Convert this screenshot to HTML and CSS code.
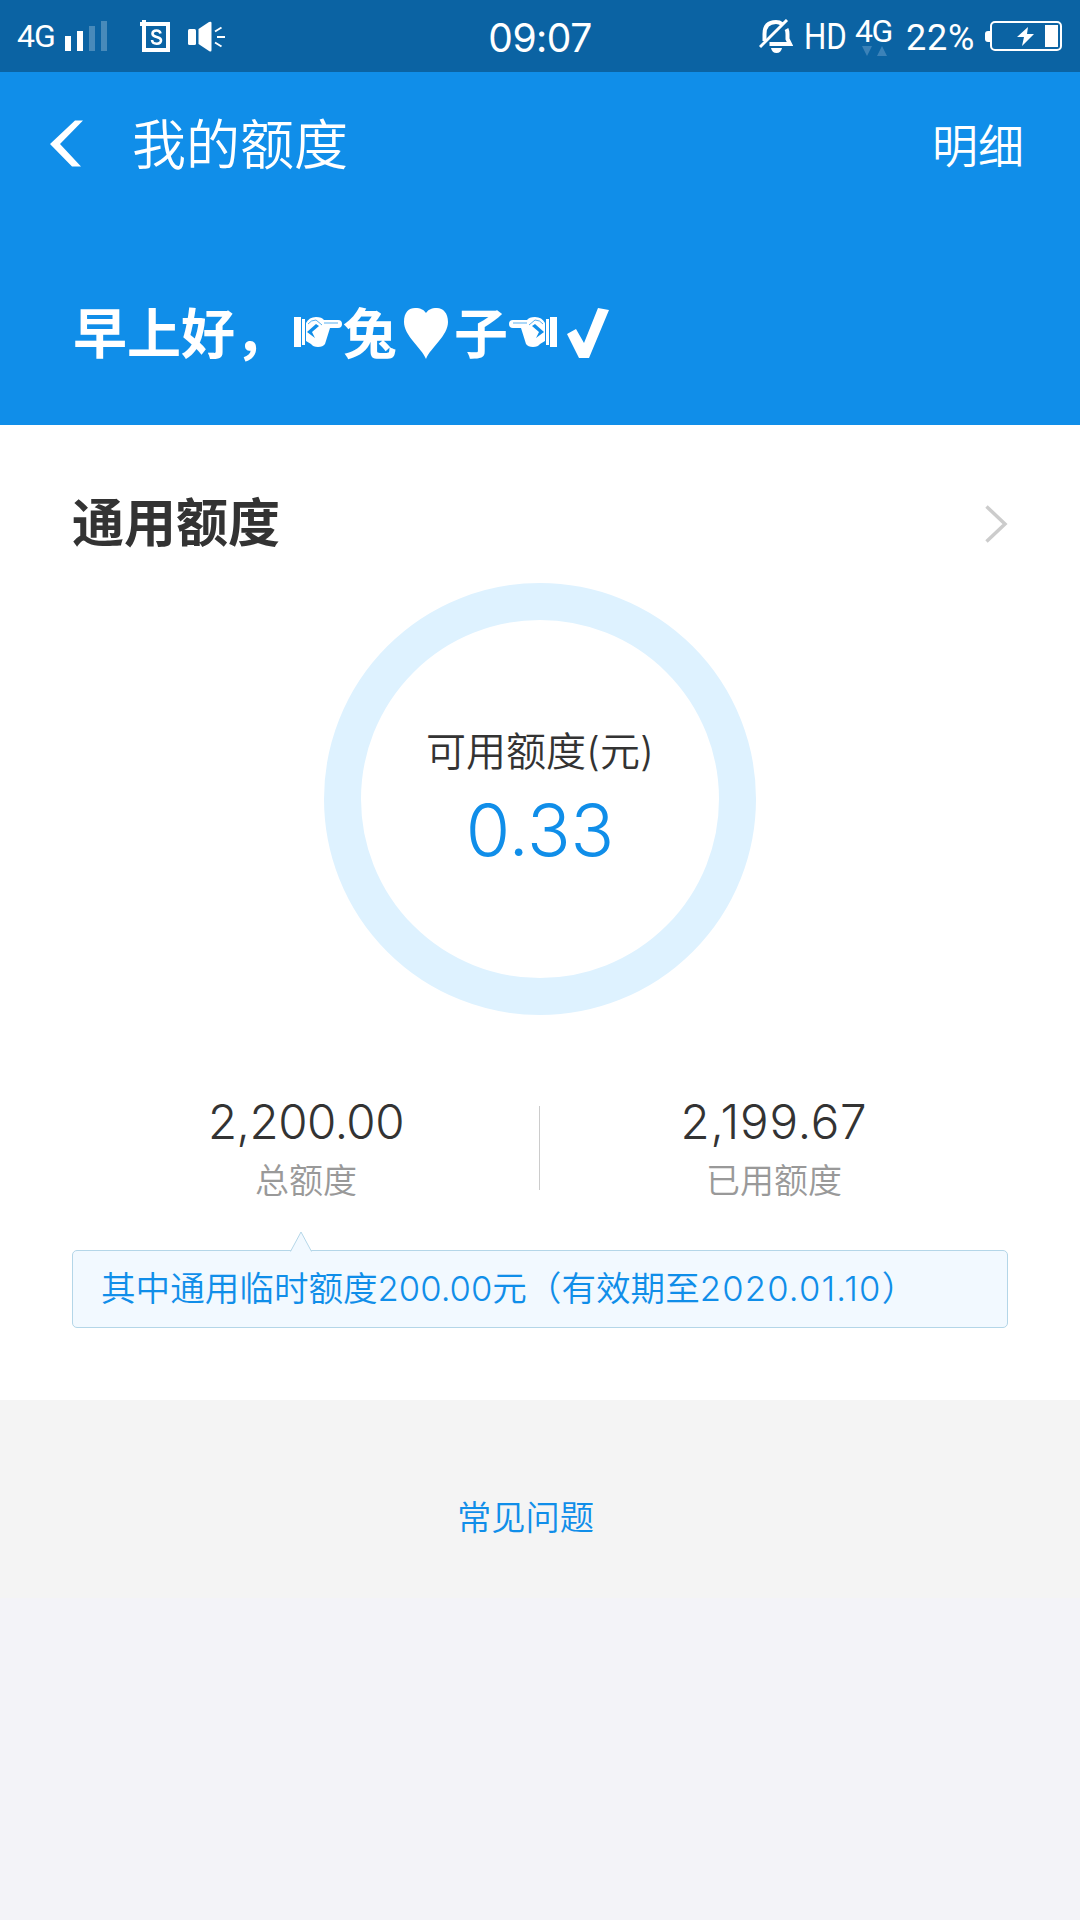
FILE: index.html
```html
<!DOCTYPE html>
<html lang="zh-CN">
<head>
  <meta charset="UTF-8" />
  <meta name="viewport" content="width=device-width, initial-scale=1.0" />
  <title>我的额度</title>
  <link rel="stylesheet" href="styles.css">
</head>
<body>
  <div class="status-bar">
    <div class="status-left">
      <span class="network">4G</span>
      <svg class="signal" width="42" height="30" viewBox="0 0 42 30" fill="#fff">
        <rect x="0" y="15" width="6" height="15" />
        <rect x="12" y="10" width="6" height="20" />
        <rect x="24" y="5" width="6" height="25" opacity="0.25" />
        <rect x="36" y="0" width="6" height="30" opacity="0.25" />
      </svg>
      <svg class="screenshot" width="30" height="32" viewBox="0 0 30 32" fill="none" stroke="#fff">
        <path d="M4 0v30H28V4H0" stroke-width="4" />
        <path d="M20.500 13.500C20 11 18.500 10.500 16.500 10.500C14 10.500 12.500 11.700 12.500 13.700C12.500 18.300 21 15.500 21 20.300C21 22.500 19 23.700 16.700 23.700C14 23.700 12.200 22.300 12 20" stroke-width="2.600" />
      </svg>
      <svg class="speaker" width="38" height="32" viewBox="0 0 38 32" fill="#fff">
        <rect x="0" y="8" width="8" height="16" rx="1.500" />
        <path d="M10.500 8L21 1Q23.500 0 23.500 2V29Q23.500 31.500 21 30L10.500 23Z" />
        <path d="M27 10.500L33.500 6.500M29 16H37M27 21.500L33.500 25.500" stroke="#fff" stroke-width="2" />
      </svg>
    </div>
    <div class="time">09:07</div>
    <div class="status-right">
      <svg class="bell" width="34" height="34" viewBox="0 0 34 34" fill="none" stroke="#fff">
        <path d="M5.500 22V15C5.500 7 9.500 3 17 3Q20.500 3 23 5M27.500 10Q28.500 12 28.500 15V20L31 25H10.500" stroke-width="4" />
        <path d="M1 28L28 1" stroke-width="3" />
        <path d="M12 29H23Q22 34 17.500 34Q13 34 12 29Z" fill="#fff" stroke="none" />
      </svg>
      <span class="hd">HD</span>
      <div class="data">
        <span>4G</span>
        <svg width="26" height="10" viewBox="0 0 26 10" fill="#3c82b8">
          <path d="M0 0H10L5 10ZM15 10H25L20 0Z" />
        </svg>
      </div>
      <span class="percent">22%</span>
      <svg class="battery" width="78" height="30" viewBox="0 0 78 30">
        <path d="M5 10H3Q0 10 0 13V18Q0 21 3 21H5Z" fill="#fff" />
        <rect x="6" y="1" width="70" height="28" rx="4" fill="none" stroke="#fff" stroke-width="2" />
        <path d="M43 6L32 16H39L37 25L49 13H42Z" fill="#fff" />
        <rect x="60" y="4" width="13" height="22" fill="#fff" />
      </svg>
    </div>
  </div>

  <header class="header">
    <div class="nav">
      <svg class="back" width="34" height="48" viewBox="0 0 34 48" fill="#fff">
        <path d="M25 0.500H33L10 24L31 46.500H22L0 24Z" />
      </svg>
      <h1 class="nav-title">我的额度</h1>
      <a class="nav-detail">明细</a>
    </div>
    <div class="greeting">
      <span>早上好，</span>
      <svg class="hand" width="48" height="32" viewBox="0 0 48 32">
        <path d="M0 1H7V31H0ZM8 3H11V29H8ZM12 7Q15 1 22 1Q28 1 30 4H44Q48 4 48 8Q48 12 44 12H36L31 28Q29 31 24 31Q19 31 17 28L12 25Z" fill="#fff" />
        <path d="M14 8Q17 4 22 4L28 9M30 7H44" fill="none" stroke="#108ee9" stroke-width="0.700" />
        <path d="M22 8L13 16L21 22L18 16L25 10Z" fill="#108ee9" />
      </svg>
      <span>兔</span>
      <svg class="heart" width="46" height="53" viewBox="0 0 46 53" fill="#fff">
        <path d="M23 52C18 40 1 29 1 15C1 5 6 1 12 1C18 1 21 3 23 6C25 3 28 1 34 1C40 1 45 6 45 15C45 29 28 40 23 52Z" />
      </svg>
      <span>子</span>
      <svg class="hand hand-left" width="48" height="32" viewBox="0 0 48 32">
        <path d="M0 1H7V31H0ZM8 3H11V29H8ZM12 7Q15 1 22 1Q28 1 30 4H44Q48 4 48 8Q48 12 44 12H36L31 28Q29 31 24 31Q19 31 17 28L12 25Z" fill="#fff" />
        <path d="M14 8Q17 4 22 4L28 9M30 7H44" fill="none" stroke="#108ee9" stroke-width="0.700" />
        <path d="M22 8L13 16L21 22L18 16L25 10Z" fill="#108ee9" />
      </svg>
      <svg class="check" width="42" height="51" viewBox="0 0 42 51" fill="#fff">
        <path d="M0 26L9 21L17 35L31 0L42 2L22 50H12Z" />
      </svg>
    </div>
  </header>

  <main class="card">
    <div class="card-head">
      <h2 class="card-title">通用额度</h2>
      <svg class="arrow" width="23" height="38" viewBox="0 0 23 38" fill="none" stroke="#ccc" stroke-width="3.500">
        <path d="M1.500 1.500L20 19L1.500 36.500" />
      </svg>
    </div>

    <div class="ring">
      <p class="ring-label">可用额度(元)</p>
      <p class="ring-value">0.33</p>
    </div>

    <div class="stats">
      <div class="stat">
        <p class="stat-value">2,200.00</p>
        <p class="stat-label">总额度</p>
      </div>
      <div class="stat stat-used">
        <p class="stat-value">2,199.67</p>
        <p class="stat-label">已用额度</p>
      </div>
    </div>

    <div class="tip">
      <svg class="tip-arrow" width="22" height="21" viewBox="0 0 22 21" fill="#f2f9ff" stroke="#b4d6e8">
        <path d="M0.500 20.500L11 1L21.500 20.500" />
      </svg>
      其中通用临时额度200.00元（有效期至<span class="tip-date">2020.01.10</span>）
    </div>
  </main>

  <footer class="footer">
    <a class="faq">常见问题</a>
  </footer>
</body>
</html>
```
FILE: styles.css
```css
* {
  box-sizing: border-box;
}

body {
  margin: 0;
  min-height: 1920px;
  background: #f3f3f8;
  color: #333;
  font-family: Inter, "Noto Sans CJK SC", sans-serif;
  font-weight: 350;
}

h1, h2, p {
  margin: 0;
}

svg {
  display: block;
  flex: none;
}

/* status bar */
.status-bar {
  display: grid;
  grid-template-columns: 1fr auto 1fr;
  height: 72px;
  background: #0b63a3;
  color: #fff;
  font-family: Roboto, sans-serif;
  font-weight: 400;
  white-space: nowrap;
}

.status-left, .status-right {
  display: flex;
  align-items: flex-start;
}

.status-left {
  padding-left: 17px;
}

.network {
  width: 48px;
  margin-top: 17px;
  font-size: 32px;
  line-height: 38px;
  letter-spacing: -1px;
}

.signal {
  margin-top: 21px;
}

.screenshot {
  margin: 20px 0 0 33px;
}

.speaker {
  margin: 21px 0 0 18px;
}

.time {
  margin-top: 13px;
  font-family: Inter, sans-serif;
  font-size: 39px;
  line-height: 50px;
  letter-spacing: -0.5px;
}

.status-right {
  justify-content: flex-end;
  padding-right: 17px;
}

.bell {
  margin-top: 19px;
}

.hd {
  width: 42px;
  margin: 16px 0 0 11px;
  font-size: 36px;
  line-height: 42px;
  transform: scaleX(0.87);
  transform-origin: left;
}

.data {
  width: 38px;
  margin: 14px 0 0 9px;
  font-size: 32px;
  line-height: 34px;
  letter-spacing: -1.5px;
}

.data svg {
  margin: -2px 0 0 7px;
}

.percent {
  width: 71px;
  margin: 17px 0 0 13px;
  font-size: 36px;
  line-height: 42px;
  letter-spacing: 0.8px;
}

.battery {
  margin: 21px 0 0 8px;
}

/* header */
.header {
  height: 353px;
  background: #108ee9;
  color: #fff;
}

.nav {
  display: flex;
  align-items: center;
  height: 144px;
  padding: 0 56px 0 50px;
}

.nav-title {
  flex: 1;
  margin: 4px 0 0 48px;
  font-size: 54px;
  font-weight: 350;
  line-height: 80px;
}

.nav-detail {
  margin-top: -2px;
  font-size: 46px;
}

.greeting {
  display: flex;
  align-items: center;
  height: 80px;
  margin-top: 79px;
  padding-left: 73px;
  font-size: 54px;
  font-weight: 700;
  line-height: 80px;
}

.hand {
  margin: -6px 1px 0 5px;
}

.hand-left {
  margin: -6px 0 0 1px;
  transform: scaleX(-1);
}

.heart {
  margin: -3px 5px 0 6px;
}

.check {
  margin: -3px 0 0 10px;
}

/* quota card */
.card {
  height: 975px;
  padding: 0 72px;
  background: #fff;
}

.card-head {
  display: flex;
  align-items: center;
  justify-content: space-between;
  height: 158px;
  padding-top: 40px;
}

.card-title {
  font-size: 52px;
  font-weight: 700;
  line-height: 80px;
}

.ring {
  width: 432px;
  height: 432px;
  margin: 0 auto;
  padding-top: 102px;
  border: 37.5px solid #def2ff;
  border-radius: 50%;
  text-align: center;
}

.ring-label {
  font-size: 40px;
  line-height: 60px;
}

.ring-value {
  color: #108ee9;
  font-size: 72px;
  font-weight: 300;
  line-height: 96px;
}

.stats {
  display: flex;
  margin-top: 84px;
  text-align: center;
}

.stat {
  position: relative;
  flex: 1;
}

/* thin divider on the left edge of the second column */
.stat-used::before {
  content: "";
  position: absolute;
  top: 7px;
  left: -1px;
  width: 1px;
  height: 84px;
  background: #ccc;
}

.stat-value {
  font-size: 47.5px;
  font-weight: 300;
  line-height: 46px;
  letter-spacing: -0.5px;
}

.stat-used .stat-value {
  letter-spacing: 0.8px;
}

.stat-label {
  margin-top: 11px;
  color: #999;
  font-size: 34px;
  line-height: 50px;
}

.tip {
  position: relative;
  height: 78px;
  margin-top: 44px;
  padding-left: 28px;
  background: #f2f9ff;
  border: 1px solid #b4d6e8;
  border-radius: 5px;
  color: #108ee9;
  font-size: 34.6px;
  line-height: 74px;
  white-space: nowrap;
}

.tip-date {
  letter-spacing: 1.2px;
}

.tip-arrow {
  position: absolute;
  top: -20px;
  left: 217px;
}

/* footer */
.footer {
  height: 198px;
  padding-top: 93px;
  background: #f4f4f4;
  text-align: center;
}

.faq {
  display: block;
  margin-right: 29px;
  color: #108ee9;
  font-size: 34.3px;
  line-height: 50px;
}
```
